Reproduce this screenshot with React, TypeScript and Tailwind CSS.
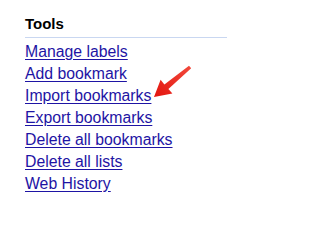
import React from 'react';

const links = [
  'Manage labels',
  'Add bookmark',
  'Import bookmarks',
  'Export bookmarks',
  'Delete all bookmarks',
  'Delete all lists',
  'Web History'
];

const App: React.FC = () => {
  return (
    <div className="relative h-[217px] w-[238px] overflow-hidden bg-white pl-[25px] pt-[15px] font-['Liberation_Sans',Arial,sans-serif]">
      <div className="w-[202px] border-b border-[#c9d7f1] pb-[4px]">
        <h2 className="text-[15px] font-bold leading-[18px] text-black">Tools</h2>
      </div>
      <ul className="mt-[3px]">
        {links.map((label) => (
          <li key={label} className="text-[15.8px] leading-[22px]">
            <a href="#" className="text-[#1e14a4] underline underline-offset-[2px]">
              {label}
            </a>
          </li>
        ))}
      </ul>
      {/* red pointer arrow */}
      <svg
        className="absolute left-[150px] top-[62px]"
        width="46"
        height="40"
        viewBox="0 0 46 40"
      >
        <defs>
          <linearGradient id="arrowFill" x1="0" y1="1" x2="1" y2="0">
            <stop offset="0" stopColor="#e3150f" />
            <stop offset="1" stopColor="#f2493b" />
          </linearGradient>
        </defs>
        <path
          d="M4 35 L22.4 31.6 L18.4 27 L41.2 6.2 L39 3.8 L14.4 22.6 L10.6 17.8 Z"
          fill="url(#arrowFill)"
        />
      </svg>
    </div>
  );
};

export default App;
